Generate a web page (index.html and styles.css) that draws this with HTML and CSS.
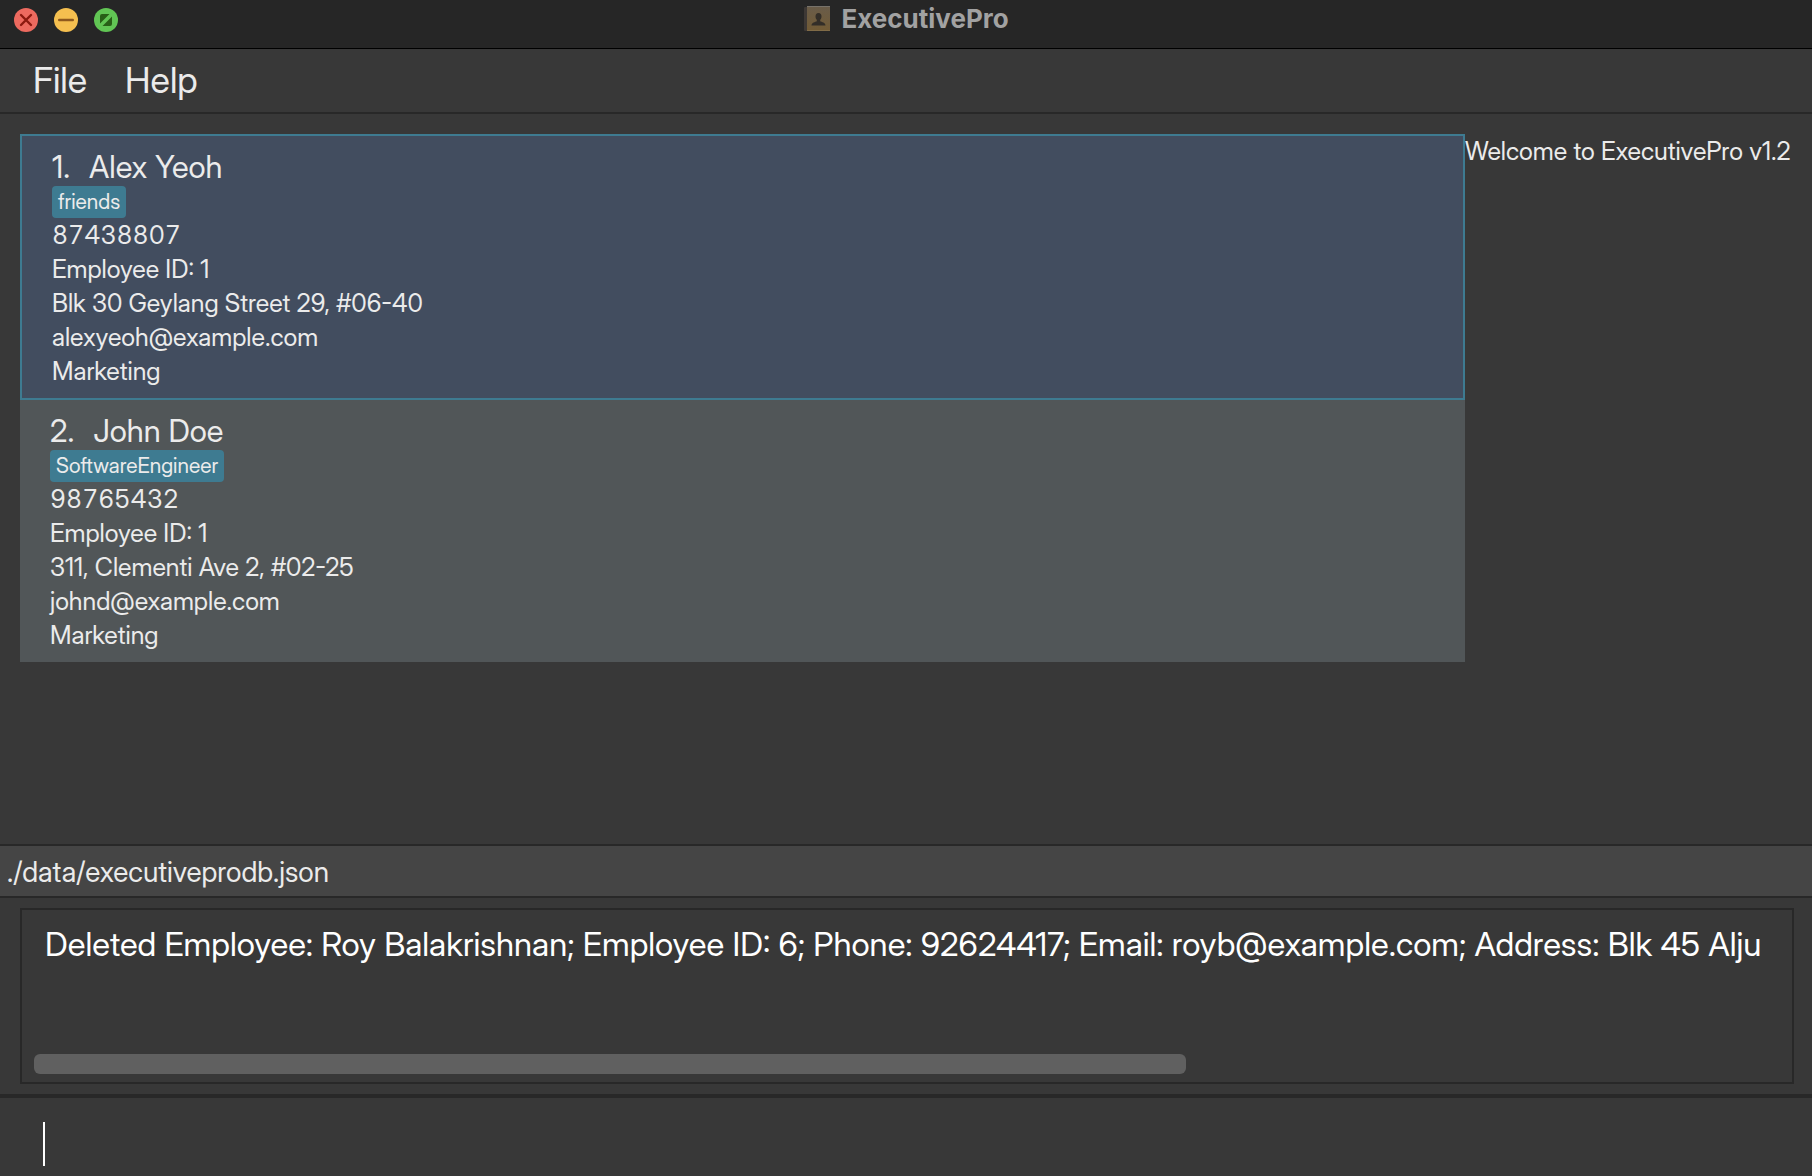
FILE: index.html
```
<!DOCTYPE html>
<html lang="en">
<head>
<meta charset="utf-8">
<title>ExecutivePro</title>
<link rel="stylesheet" href="styles.css">
</head>
<body>
<div class="window">
  <header class="titlebar">
    <div class="controls">
      <button class="control" type="button" aria-label="Close">
        <svg viewBox="0 0 24 24"><circle cx="12" cy="12" r="12" fill="#ed6a5f"/><path d="M7 7l10 10M17 7L7 17" stroke="#8c1a10" stroke-width="2.4" stroke-linecap="round"/></svg>
      </button>
      <button class="control" type="button" aria-label="Minimize">
        <svg viewBox="0 0 24 24"><circle cx="12" cy="12" r="12" fill="#f5bf4f"/><path d="M5.300 12h13.400" stroke="#8f591d" stroke-width="2.600" stroke-linecap="round"/></svg>
      </button>
      <button class="control" type="button" aria-label="Zoom">
        <svg viewBox="0 0 24 24"><circle cx="12" cy="12" r="12" fill="#61c554"/><path d="M6 15.500V8a2 2 0 0 1 2-2h7.500zM18 8.500V16a2 2 0 0 1-2 2H8.500z" fill="#285f17"/></svg>
      </button>
    </div>
    <h1 class="title">
      <svg class="title-icon" viewBox="0 0 28 26" aria-hidden="true">
        <defs><linearGradient id="cover" x1="0" y1="0" x2="0" y2="1"><stop offset="0" stop-color="#695c4a"/><stop offset="1" stop-color="#725b35"/></linearGradient></defs>
        <rect x="1" y="1" width="4" height="24" rx="1" fill="#3d3835"/>
        <rect x="4" y="0" width="23" height="25" rx="1" fill="url(#cover)"/>
        <path d="M4 .5h23" stroke="#77726a"/>
        <path d="M4 24.500h23" stroke="#806b47"/>
        <path d="M15.500 7c2 0 3 1.500 3 3.500 0 1.500-.6 2.600-1.300 3.300v1.500c1.500.8 5.300 1.200 5.300 4.200h-14c0-3 3.800-3.400 5.300-4.200v-1.500c-.7-.7-1.300-1.800-1.300-3.300 0-2 1-3.500 3-3.500z" fill="#332e28"/>
      </svg>
      ExecutivePro
    </h1>
  </header>

  <nav class="menubar">
    <button class="menu" type="button">File</button>
    <button class="menu" type="button">Help</button>
  </nav>

  <main class="content">
    <ol class="people">
      <li class="person selected">
        <h2 class="name"><span>1.</span><span>Alex Yeoh</span></h2>
        <span class="tag">friends</span>
        <p class="phone">87438807</p>
        <p>Employee ID: 1</p>
        <p>Blk 30 Geylang Street 29, #06-40</p>
        <p>alexyeoh@example.com</p>
        <p>Marketing</p>
      </li>
      <li class="person">
        <h2 class="name"><span>2.</span><span>John Doe</span></h2>
        <span class="tag">SoftwareEngineer</span>
        <p class="phone">98765432</p>
        <p>Employee ID: 1</p>
        <p>311, Clementi Ave 2, #02-25</p>
        <p>johnd@example.com</p>
        <p>Marketing</p>
      </li>
    </ol>
    <aside class="welcome">Welcome to ExecutivePro v1.2</aside>
  </main>

  <div class="statusbar">./data/executiveprodb.json</div>

  <section class="result">
    <div class="result-box">
      <textarea class="result-text" aria-label="Result" wrap="off" rows="1" readonly>Deleted Employee: Roy Balakrishnan; Employee ID: 6; Phone: 92624417; Email: royb@example.com; Address: Blk 45 Alju</textarea>
      <div class="scrollbar"><div class="thumb"></div></div>
    </div>
  </section>

  <div class="command">
    <input class="command-input" type="text" aria-label="Command" autofocus>
    <span class="caret"></span>
  </div>
</div>
</body>
</html>
```

FILE: styles.css
```
* {
  box-sizing: border-box;
}

body {
  margin: 0;
  background: #383838;
  color: #ebebeb;
  font-family: "Inter Display", Inter, "Liberation Sans", sans-serif;
  font-size: 25px;
  line-height: 34px;
}

button,
input,
textarea {
  margin: 0;
  padding: 0;
  border: 0;
  outline: 0;
  background: none;
  color: inherit;
  font: inherit;
}

h1,
h2,
p,
ol {
  margin: 0;
  padding: 0;
}

.window {
  display: flex;
  flex-direction: column;
  min-height: 100vh;
}

.titlebar {
  display: grid;
  grid-template-columns: 1fr auto 1fr;
  height: 49px;
  padding: 0 14px;
  border-bottom: 1px solid #000;
  background: #262626;
}

.controls {
  display: flex;
  gap: 16px;
  padding-top: 8px;
}

.control {
  width: 24px;
  height: 24px;
}

.control svg {
  display: block;
}

.title {
  display: flex;
  align-items: center;
  gap: 10px;
  height: 38px;
  color: #a2a2a2;
  font-family: Inter, "Liberation Sans", sans-serif;
  font-size: 26px;
  font-weight: 700;
}

.title-icon {
  width: 28px;
  height: 26px;
}

.menubar {
  display: flex;
  gap: 38px;
  height: 65px;
  padding: 0 33px 2px;
  border-bottom: 2px solid #282828;
}

.menu {
  font-size: 36px;
}

.content {
  display: flex;
  flex: 1;
  padding: 20px 18px 20px 20px;
}

.people {
  flex: 1;
  list-style: none;
}

.person {
  display: flex;
  flex-direction: column;
  align-items: flex-start;
  padding: 14px 30px 10px;
  background: #515658;
}

.selected {
  border: 2px solid #3e7b91;
  background: #424d5f;
}

.name {
  display: flex;
  gap: 19px;
  padding-bottom: 2px;
  font-size: 31px;
  font-weight: 400;
  line-height: 34px;
}

.tag {
  padding: 0 6px;
  border-radius: 4px;
  background: #3e7b91;
  font-size: 21px;
  line-height: 32px;
}

.phone {
  font-variant-numeric: tabular-nums;
}

.welcome {
  width: 329px;
  white-space: nowrap;
}

.statusbar {
  padding: 8px 7px 6px;
  border: solid #282828;
  border-width: 2px 0;
  background: #454545;
  font-size: 28px;
  line-height: 36px;
}

.result {
  padding: 10px 18px 10px 20px;
}

.result-box {
  display: flex;
  flex-direction: column;
  justify-content: space-between;
  height: 176px;
  padding: 12px 0 8px 12px;
  border: 2px solid #282828;
}

.result-text {
  width: 100%;
  height: 44px;
  padding-left: 11px;
  overflow: hidden;
  resize: none;
  color: #fff;
  font-size: 33px;
  line-height: 44px;
}

.scrollbar {
  padding-right: 12px;
}

.thumb {
  width: 66%;
  height: 20px;
  border-radius: 6px;
  background: #606060;
}

.command {
  position: relative;
  padding: 15px 20px 0;
  border-top: 4px solid #282828;
}

.command-input {
  display: block;
  width: 100%;
  height: 63px;
  padding: 0 23px;
  caret-color: transparent;
  color: #fff;
  font-size: 33px;
}

.caret {
  position: absolute;
  top: 24px;
  left: 43px;
  width: 2px;
  height: 44px;
  background: #fff;
}
```
